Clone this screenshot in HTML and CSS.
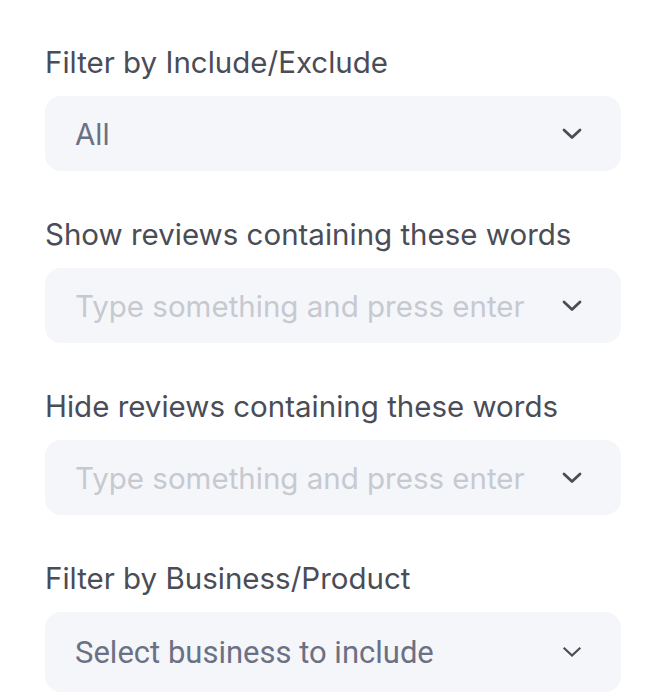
FILE: index.html
```html
<!DOCTYPE html>
<html>
<head>
<meta charset="utf-8">
<link rel="stylesheet" href="styles.css">
</head>
<body>
<div class="filters">
  <div class="field">
    <div class="label">Filter by Include/Exclude</div>
    <div class="select">
      <span class="value">All</span>
      <svg class="chev" width="20" height="12" viewBox="0 0 20 12"><path d="M2 2 L10 9.5 L18 2" fill="none" stroke="#4b4d55" stroke-width="2.8" stroke-linecap="round" stroke-linejoin="round"/></svg>
    </div>
  </div>
  <div class="field">
    <div class="label">Show reviews containing these words</div>
    <div class="select">
      <span class="placeholder">Type something and press enter</span>
      <svg class="chev" width="20" height="12" viewBox="0 0 20 12"><path d="M2 2 L10 9.5 L18 2" fill="none" stroke="#4b4d55" stroke-width="2.8" stroke-linecap="round" stroke-linejoin="round"/></svg>
    </div>
  </div>
  <div class="field">
    <div class="label">Hide reviews containing these words</div>
    <div class="select">
      <span class="placeholder">Type something and press enter</span>
      <svg class="chev" width="20" height="12" viewBox="0 0 20 12"><path d="M2 2 L10 9.5 L18 2" fill="none" stroke="#4b4d55" stroke-width="2.8" stroke-linecap="round" stroke-linejoin="round"/></svg>
    </div>
  </div>
  <div class="field">
    <div class="label">Filter by Business/Product</div>
    <div class="select select-roboto">
      <span class="value">Select business to include</span>
      <svg class="chev" width="20" height="12" viewBox="0 0 20 12"><path d="M2.5 2.5 L10 9.5 L17.5 2.5" fill="none" stroke="#4b4d55" stroke-width="2.2" stroke-linecap="square"/></svg>
    </div>
  </div>
</div>
</body>
</html>
```
FILE: styles.css
```css
html, body {
  margin: 0;
  padding: 0;
  background: #ffffff;
}
body {
  font-family: "Inter", "Noto Sans", sans-serif;
}
.filters {
  padding: 46px 43px 0 45px;
  display: flex;
  flex-direction: column;
  gap: 47px;
}
.field {
  display: flex;
  flex-direction: column;
  gap: 18px;
}
.label {
  font-size: 29.5px;
  line-height: 32px;
  color: #4a4c56;
  font-weight: 400;
}
.select {
  height: 75px;
  box-sizing: border-box;
  background: #f5f6fa;
  border-radius: 16px;
  display: flex;
  align-items: center;
  justify-content: space-between;
  padding: 0 39px 0 30px;
}
.value {
  font-size: 29.5px;
  color: #6b7184;
}
.placeholder {
  font-size: 29.5px;
  color: #c6c9d0;
}
.chev {
  display: block;
  flex: none;
}
.select-roboto {
  height: 80px;
}
.select-roboto .value {
  font-family: "Roboto", "Liberation Sans", sans-serif;
  font-size: 31px;
}
```
